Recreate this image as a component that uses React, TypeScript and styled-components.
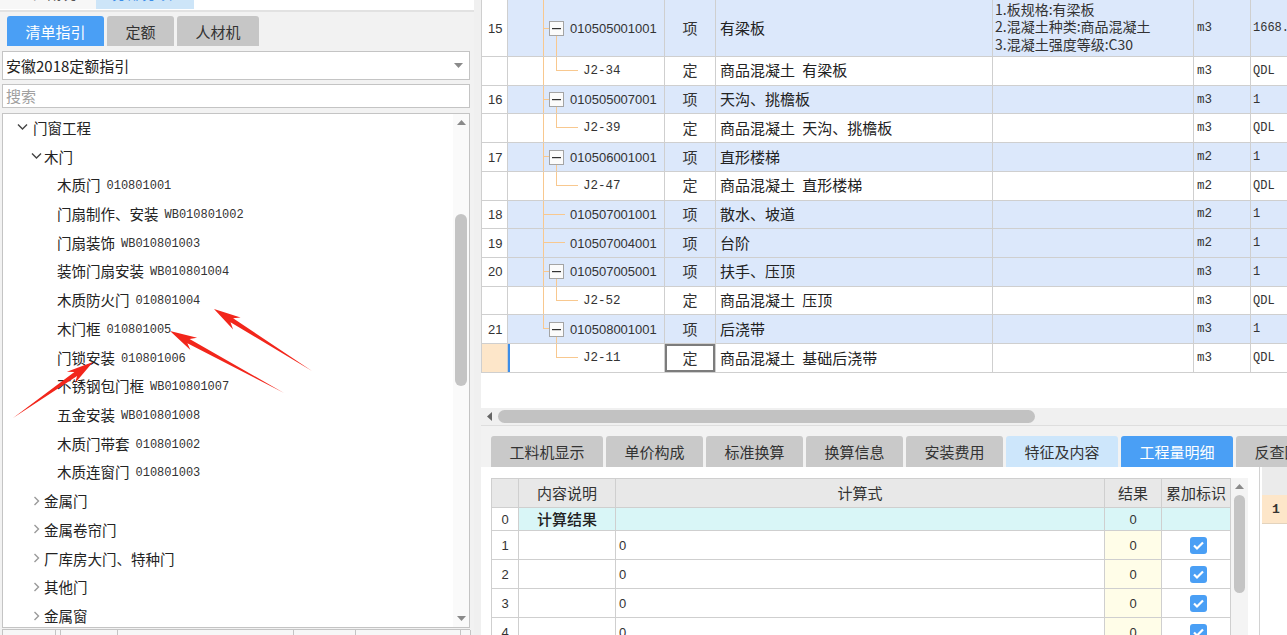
import React from "react";
import styled, { createGlobalStyle } from "styled-components";

const GlobalStyle = createGlobalStyle`
  html, body { margin: 0; padding: 0; background: #fff; }
  body {
    font-family: "Noto Sans CJK SC", "Liberation Sans", sans-serif;
    color: #222;
    overflow: hidden;
  }
  * { box-sizing: border-box; }
`;

const CJK = `"Noto Sans CJK SC", "Liberation Sans", sans-serif`;
const MONO = `"Liberation Mono", "Noto Sans CJK SC", monospace`;
const SANS = `"Liberation Sans", "Noto Sans CJK SC", sans-serif`;
const LINE = "#cfcfcf";

type TreeItem = { label: string; code?: string; level: 0 | 1 | 2; state?: "open" | "closed" };

const treeItems: TreeItem[] = [
  { label: "门窗工程", level: 0, state: "open" },
  { label: "木门", level: 1, state: "open" },
  { label: "木质门", code: "010801001", level: 2 },
  { label: "门扇制作、安装", code: "WB010801002", level: 2 },
  { label: "门扇装饰", code: "WB010801003", level: 2 },
  { label: "装饰门扇安装", code: "WB010801004", level: 2 },
  { label: "木质防火门", code: "010801004", level: 2 },
  { label: "木门框", code: "010801005", level: 2 },
  { label: "门锁安装", code: "010801006", level: 2 },
  { label: "不锈钢包门框", code: "WB010801007", level: 2 },
  { label: "五金安装", code: "WB010801008", level: 2 },
  { label: "木质门带套", code: "010801002", level: 2 },
  { label: "木质连窗门", code: "010801003", level: 2 },
  { label: "金属门", level: 1, state: "closed" },
  { label: "金属卷帘门", level: 1, state: "closed" },
  { label: "厂库房大门、特种门", level: 1, state: "closed" },
  { label: "其他门", level: 1, state: "closed" },
  { label: "金属窗", level: 1, state: "closed" },
];

type GridRow = {
  no?: string;
  code: string;
  type: string;
  name: string;
  feature?: string[];
  unit: string;
  qty: string;
  kind: "item" | "sub";
  child?: boolean;
  last?: boolean;
  selected?: boolean;
  tall?: boolean;
};

const gridRows: GridRow[] = [
  {
    no: "15", code: "010505001001", type: "项", name: "有梁板", unit: "m3", qty: "1668.",
    kind: "item", child: true, tall: true,
    feature: ["1.板规格:有梁板", "2.混凝土种类:商品混凝土", "3.混凝土强度等级:C30"],
  },
  { code: "J2-34", type: "定", name: "商品混凝土 有梁板", unit: "m3", qty: "QDL", kind: "sub" },
  { no: "16", code: "010505007001", type: "项", name: "天沟、挑檐板", unit: "m3", qty: "1", kind: "item", child: true },
  { code: "J2-39", type: "定", name: "商品混凝土 天沟、挑檐板", unit: "m3", qty: "QDL", kind: "sub" },
  { no: "17", code: "010506001001", type: "项", name: "直形楼梯", unit: "m2", qty: "1", kind: "item", child: true },
  { code: "J2-47", type: "定", name: "商品混凝土 直形楼梯", unit: "m2", qty: "QDL", kind: "sub" },
  { no: "18", code: "010507001001", type: "项", name: "散水、坡道", unit: "m2", qty: "1", kind: "item" },
  { no: "19", code: "010507004001", type: "项", name: "台阶", unit: "m2", qty: "1", kind: "item" },
  { no: "20", code: "010507005001", type: "项", name: "扶手、压顶", unit: "m3", qty: "1", kind: "item", child: true },
  { code: "J2-52", type: "定", name: "商品混凝土 压顶", unit: "m3", qty: "QDL", kind: "sub" },
  { no: "21", code: "010508001001", type: "项", name: "后浇带", unit: "m3", qty: "1", kind: "item", child: true, last: true },
  { code: "J2-11", type: "定", name: "商品混凝土 基础后浇带", unit: "m3", qty: "QDL", kind: "sub", last: true, selected: true },
];

const bottomTabs = [
  { label: "工料机显示", w: 112 },
  { label: "单价构成", w: 97 },
  { label: "标准换算", w: 97 },
  { label: "换算信息", w: 97 },
  { label: "安装费用", w: 97 },
  { label: "特征及内容", w: 112, tone: "light" },
  { label: "工程量明细", w: 112, tone: "active" },
  { label: "反查图形工程量", w: 142 },
];

/* ---------- layout ---------- */

const Screen = styled.div`
  position: relative;
  display: flex;
  width: 1287px;
  height: 635px;
  overflow: hidden;
  background: #fff;
`;

const LeftPane = styled.div`
  width: 474px;
  flex: none;
  display: flex;
  flex-direction: column;
  background: #f2f2f2;
`;

const Splitter = styled.div`
  width: 7px;
  flex: none;
  background: #f0f0f0;
`;

const RightPane = styled.div`
  flex: 1;
  min-width: 0;
  display: flex;
  flex-direction: column;
  overflow: hidden;
  background: #fff;
`;

/* ---------- left pane ---------- */

const TopStrip = styled.div`
  height: 12px;
  flex: none;
  display: flex;
  align-items: flex-start;
  overflow: hidden;
  background: #fff;
  border-bottom: 2px solid #e2e2e2;
`;

const TopTab = styled.div<{ $w: number; $bg: string; $color: string }>`
  width: ${(p) => p.$w}px;
  height: 26px;
  margin-top: -17px;
  padding-left: 16px;
  flex: none;
  background: ${(p) => p.$bg};
  color: ${(p) => p.$color};
  font-size: 15px;
  line-height: 20px;
`;

const TabRow = styled.div`
  height: 34px;
  flex: none;
  display: flex;
  align-items: flex-end;
  gap: 3px;
  padding-left: 7px;
`;

const GuideTab = styled.div<{ $w: number; $active?: boolean }>`
  width: ${(p) => p.$w}px;
  height: 30px;
  display: flex;
  align-items: center;
  justify-content: center;
  border-radius: 3px 3px 0 0;
  background: ${(p) => (p.$active ? "#4a9ff5" : "#c6c6c6")};
  color: ${(p) => (p.$active ? "#fff" : "#333")};
  font-size: 15px;
`;

const Select = styled.div`
  height: 29px;
  margin: 5px 4px 0 2px;
  display: flex;
  align-items: center;
  justify-content: space-between;
  padding: 0 6px 0 3px;
  background: #fff;
  border: 1px solid #c4c4c4;
  font-size: 15px;
  color: #222;
`;

const SearchBox = styled.div`
  height: 24px;
  margin: 4px 4px 0 2px;
  display: flex;
  align-items: center;
  padding-left: 3px;
  background: #fff;
  border: 1px solid #c4c4c4;
  font-size: 15px;
  color: #a0a0a0;
`;

const TreeBox = styled.div`
  height: 516px;
  margin: 5px 4px 0 2px;
  display: flex;
  background: #fff;
  border: 1px solid #c4c4c4;
  overflow: hidden;
`;

const TreeList = styled.div`
  flex: 1;
  min-width: 0;
`;

const TreeRow = styled.div<{ $pad: number }>`
  height: 28.72px;
  display: flex;
  align-items: center;
  padding-left: ${(p) => p.$pad}px;
  padding-bottom: 2px;
  white-space: nowrap;
  font-size: 14.5px;
  color: #222;
`;

const Twisty = styled.span<{ $gap: number }>`
  width: 16px;
  height: 12px;
  margin-right: ${(p) => p.$gap}px;
  display: inline-flex;
  align-items: center;
  justify-content: center;
  flex: none;
`;

const TreeCode = styled.span`
  margin-left: 6px;
  margin-top: 3px;
  font-family: ${MONO};
  font-size: 12px;
  color: #333;
`;

const VScroll = styled.div`
  width: 16px;
  flex: none;
  display: flex;
  flex-direction: column;
  align-items: center;
  background: #fafafa;
`;

const ScrollArrow = styled.div<{ $h: number }>`
  height: ${(p) => p.$h}px;
  width: 100%;
  flex: none;
  display: flex;
  align-items: center;
  justify-content: center;
`;

const ScrollTrack = styled.div`
  flex: 1;
  width: 100%;
  display: flex;
  flex-direction: column;
  align-items: center;
`;

const Thumb = styled.div<{ $top: number; $h: number; $w: number }>`
  margin-top: ${(p) => p.$top}px;
  height: ${(p) => p.$h}px;
  width: ${(p) => p.$w}px;
  border-radius: 6px;
  background: #c4c4c4;
`;

const FooterStrip = styled.div`
  height: 6px;
  margin: 1px 4px 0 2px;
  display: flex;
  background: #f7f7f7;
  border-top: 1px solid #c4c4c4;
  border-left: 1px solid #c4c4c4;
`;

const FooterCell = styled.div<{ $w: number }>`
  width: ${(p) => p.$w}px;
  flex: none;
  border-right: 1px solid #c4c4c4;
`;

/* ---------- upper grid ---------- */

const UpperArea = styled.div`
  height: 408px;
  flex: none;
`;

const GridRowBox = styled.div<{ $tall?: boolean; $bg: string }>`
  display: grid;
  grid-template-columns: 27px 157px 51px 277px 201px 57px 60px;
  width: 830px;
  height: ${(p) => (p.$tall ? "57px" : "28.73px")};
  background: ${(p) => p.$bg};
`;

const Cell = styled.div`
  display: flex;
  align-items: center;
  min-width: 0;
  overflow: hidden;
  white-space: nowrap;
  border-right: 1px solid ${LINE};
  border-bottom: 1px solid ${LINE};
`;

const NoCell = styled(Cell)<{ $selected?: boolean }>`
  border-left: 1px solid ${LINE};
  padding-left: 6px;
  background: ${(p) => (p.$selected ? "#fde6c9" : "#fff")};
  font-family: ${SANS};
  font-size: 13px;
  color: #333;
`;

const TreeCell = styled(Cell)<{ $pad: number; $selected?: boolean }>`
  position: relative;
  padding-left: ${(p) => p.$pad}px;
  box-shadow: ${(p) => (p.$selected ? "inset 2px 0 0 #3d8ee8" : "none")};
`;

const Connectors = styled.svg`
  position: absolute;
  inset: 0;
  width: 100%;
  height: 100%;
`;

const Toggle = styled.span`
  position: relative;
  width: 15px;
  height: 15px;
  margin-right: 6px;
  flex: none;
  display: inline-flex;
  align-items: center;
  justify-content: center;
  background: #fbfbfb;
  border: 1px solid #a4a4a4;
`;

const ItemCode = styled.span`
  position: relative;
  font-family: ${SANS};
  font-size: 13px;
  color: #333;
`;

const SubCode = styled.span`
  position: relative;
  font-family: ${MONO};
  font-size: 12.5px;
  color: #333;
`;

const TypeCell = styled(Cell)<{ $focus?: boolean }>`
  justify-content: center;
  padding-bottom: 2px;
  font-size: 15px;
  color: #333;
  box-shadow: ${(p) => (p.$focus ? "inset 0 0 0 2px #7c7c7c" : "none")};
`;

const NameCell = styled(Cell)`
  padding-left: 4px;
  padding-bottom: 2px;
  font-size: 15px;
  word-spacing: 4px;
  color: #222;
`;

const FeatureCell = styled(Cell)`
  flex-direction: column;
  align-items: flex-start;
  justify-content: center;
  padding-left: 2px;
  padding-bottom: 2px;
  font-size: 14px;
  line-height: 17.5px;
  color: #333;
`;

const MonoCell = styled(Cell)`
  padding-left: 3px;
  font-family: ${MONO};
  font-size: 12.5px;
  color: #333;
`;

const QtyCell = styled(MonoCell)`
  padding-left: 2px;
  font-size: 12px;
`;

const HScroll = styled.div`
  height: 18px;
  flex: none;
  display: flex;
  align-items: center;
  padding-left: 6px;
  background: #f0f0f0;
  border-bottom: 1px solid #dedede;
`;

const HThumb = styled.div`
  width: 537px;
  height: 13px;
  margin-left: 6px;
  border-radius: 7px;
  background: #c2c2c2;
`;

/* ---------- bottom tabs + detail ---------- */

const DetailTabs = styled.div`
  height: 41px;
  flex: none;
  display: flex;
  align-items: flex-end;
  gap: 3px;
  padding-left: 10px;
  background: #f2f2f2;
`;

const DetailTab = styled.div<{ $w: number; $tone?: string }>`
  width: ${(p) => p.$w}px;
  height: 31px;
  flex: none;
  display: flex;
  align-items: center;
  justify-content: center;
  border-radius: 3px 3px 0 0;
  font-size: 15px;
  background: ${(p) => (p.$tone === "active" ? "#4a9ff5" : p.$tone === "light" ? "#cde6fb" : "#c9c9c9")};
  color: ${(p) => (p.$tone === "active" ? "#fff" : "#333")};
`;

const LowerArea = styled.div`
  flex: 1;
  display: flex;
  min-height: 0;
`;

const DetailPanel = styled.div`
  width: 778px;
  flex: none;
  padding: 11px 0 0 10px;
  display: flex;
  align-items: flex-start;
  background: #fff;
`;

const DetailGrid = styled.div`
  width: 740px;
  flex: none;
  border-top: 1px solid ${LINE};
`;

const DRow = styled.div<{ $h: number }>`
  display: grid;
  grid-template-columns: 28px 97px 489px 57px 69px;
  height: ${(p) => p.$h}px;
`;

const DCell = styled.div<{ $bg?: string; $align?: string }>`
  display: flex;
  align-items: center;
  justify-content: ${(p) => p.$align ?? "center"};
  padding-left: ${(p) => (p.$align === "flex-start" ? "3px" : "0")};
  background: ${(p) => p.$bg ?? "#fff"};
  border-right: 1px solid ${LINE};
  border-bottom: 1px solid ${LINE};
  font-family: ${SANS};
  font-size: 13px;
  color: #333;
  overflow: hidden;
  white-space: nowrap;
`;

const DNo = styled(DCell)`
  border-left: 1px solid ${LINE};
`;

const DHead = styled(DCell)`
  background: #e8e8e8;
  padding-bottom: 2px;
  font-family: ${CJK};
  font-size: 15px;
`;

const DHeadNo = styled(DHead)`
  border-left: 1px solid ${LINE};
`;

const DLabel = styled(DCell)`
  padding-bottom: 2px;
  font-family: ${CJK};
  font-size: 15px;
  font-weight: 500;
  color: #222;
`;

const Check = styled.span`
  width: 17px;
  height: 17px;
  margin-left: 4px;
  border-radius: 3px;
  background: #4a9ff5;
  display: inline-flex;
  align-items: center;
  justify-content: center;
`;

const DetailScroll = styled(VScroll)`
  width: 17px;
  height: 168px;
  background: #f4f4f4;
`;

const SidePanel = styled.div`
  flex: 1;
  padding-left: 2px;
  background: #fff;
  border-left: 1px solid #d2d2d2;
`;

const SideHead = styled.div`
  height: 28px;
  background: #ebebeb;
`;

const SideCell = styled.div`
  height: 29px;
  display: flex;
  align-items: center;
  padding-left: 10px;
  background: #fde6c9;
  border-bottom: 1px solid #e3d3bd;
  font-family: ${MONO};
  font-size: 13px;
  font-weight: bold;
  color: #333;
`;

/* ---------- annotation arrows ---------- */

const Annotations = styled.svg`
  position: absolute;
  left: 0;
  top: 0;
  pointer-events: none;
  z-index: 5;
`;

function arrowPoints(tx: number, ty: number, px: number, py: number, head = 27, barb = 7) {
  const dx = px - tx;
  const dy = py - ty;
  const len = Math.hypot(dx, dy);
  const ux = dx / len;
  const uy = dy / len;
  const nx = -uy;
  const ny = ux;
  const neck = head * 0.78;
  const bx = px - ux * neck;
  const by = py - uy * neck;
  const wx = px - ux * head;
  const wy = py - uy * head;
  const pts = [
    [tx, ty],
    [bx + nx * 2.4, by + ny * 2.4],
    [wx + nx * barb, wy + ny * barb],
    [px, py],
    [wx - nx * barb, wy - ny * barb],
    [bx - nx * 2.4, by - ny * 2.4],
  ];
  return pts.map((p) => `${p[0].toFixed(1)},${p[1].toFixed(1)}`).join(" ");
}

/* ---------- pieces ---------- */

function Chevron({ open }: { open: boolean }) {
  return open ? (
    <svg width="11" height="8" viewBox="0 0 11 8">
      <polyline points="1,1.5 5.5,6 10,1.5" fill="none" stroke="#444" strokeWidth="1.4" />
    </svg>
  ) : (
    <svg width="7" height="10" viewBox="0 0 7 10">
      <polyline points="1.5,1 5.5,5 1.5,9" fill="none" stroke="#9a9a9a" strokeWidth="1.4" />
    </svg>
  );
}

function Triangle({ dir, color = "#777" }: { dir: "up" | "down" | "left"; color?: string }) {
  const pts = dir === "up" ? "0,5 4.5,0 9,5" : dir === "down" ? "0,0 4.5,5 9,0" : "5,0 0,4.5 5,9";
  const w = dir === "left" ? 5 : 9;
  const h = dir === "left" ? 9 : 5;
  return (
    <svg width={w} height={h} viewBox={`0 0 ${w} ${h}`}>
      <polygon points={pts} fill={color} />
    </svg>
  );
}

function TreeLines({ row }: { row: GridRow }) {
  const c = "#f8c88f";
  if (row.kind === "item") {
    return (
      <Connectors shapeRendering="crispEdges">
        <line x1="35.5" x2="35.5" y1="0" y2={row.last ? "50%" : "100%"} stroke={c} />
        <line x1="35.5" x2={row.child ? 41 : 57} y1="50%" y2="50%" stroke={c} />
        {row.child && <line x1="48.5" x2="48.5" y1="50%" y2="100%" stroke={c} />}
      </Connectors>
    );
  }
  return (
    <Connectors shapeRendering="crispEdges">
      {!row.last && <line x1="35.5" x2="35.5" y1="0" y2="100%" stroke={c} />}
      <line x1="48.5" x2="48.5" y1="0" y2="50%" stroke={c} />
      <line x1="48.5" x2="70" y1="50%" y2="50%" stroke={c} />
    </Connectors>
  );
}

function UpperGrid() {
  return (
    <UpperArea>
      {gridRows.map((r, i) => {
        const pad = r.kind === "sub" ? 75 : r.child ? 41 : 62;
        return (
          <GridRowBox key={i} $tall={r.tall} $bg={r.kind === "item" ? "#dce8fb" : "#fff"}>
            <NoCell $selected={r.selected}>{r.no}</NoCell>
            <TreeCell $pad={pad} $selected={r.selected}>
              <TreeLines row={r} />
              {r.kind === "item" && r.child && (
                <Toggle>
                  <svg width="9" height="3" viewBox="0 0 9 3">
                    <rect x="0" y="1" width="9" height="1.2" fill="#333" />
                  </svg>
                </Toggle>
              )}
              {r.kind === "item" ? <ItemCode>{r.code}</ItemCode> : <SubCode>{r.code}</SubCode>}
            </TreeCell>
            <TypeCell $focus={r.selected}>{r.type}</TypeCell>
            <NameCell>{r.name}</NameCell>
            <FeatureCell>
              {r.feature?.map((f) => (
                <span key={f}>{f}</span>
              ))}
            </FeatureCell>
            <MonoCell>{r.unit}</MonoCell>
            <QtyCell>{r.qty}</QtyCell>
          </GridRowBox>
        );
      })}
    </UpperArea>
  );
}

function DetailTable() {
  return (
    <DetailGrid>
      <DRow $h={29}>
        <DHeadNo />
        <DHead>内容说明</DHead>
        <DHead>计算式</DHead>
        <DHead>结果</DHead>
        <DHead>累加标识</DHead>
      </DRow>
      <DRow $h={23}>
        <DNo>0</DNo>
        <DLabel $bg="#d9f6f7">计算结果</DLabel>
        <DCell $bg="#d9f6f7" />
        <DCell $bg="#d9f6f7">0</DCell>
        <DCell $bg="#d9f6f7" />
      </DRow>
      {[1, 2, 3, 4].map((n) => (
        <DRow key={n} $h={29}>
          <DNo>{n}</DNo>
          <DCell />
          <DCell $align="flex-start">0</DCell>
          <DCell $bg="#fffde8">0</DCell>
          <DCell>
            <Check>
              <svg width="13" height="11" viewBox="0 0 13 11">
                <polyline points="2,5.5 5,8.5 11,2.5" fill="none" stroke="#fff" strokeWidth="2.2" />
              </svg>
            </Check>
          </DCell>
        </DRow>
      ))}
    </DetailGrid>
  );
}

export default function App() {
  return (
    <>
      <GlobalStyle />
      <Screen>
        <LeftPane>
          <TopStrip>
            <TopTab $w={96} $bg="#f7f7f7" $color="#555">工程概况</TopTab>
            <TopTab $w={98} $bg="#cde5f8" $color="#3d8ee8">分部分项</TopTab>
          </TopStrip>
          <TabRow>
            <GuideTab $w={97} $active>清单指引</GuideTab>
            <GuideTab $w={67}>定额</GuideTab>
            <GuideTab $w={82}>人材机</GuideTab>
          </TabRow>
          <Select>
            <span>安徽2018定额指引</span>
            <Triangle dir="down" color="#8a8a8a" />
          </Select>
          <SearchBox>搜索</SearchBox>
          <TreeBox>
            <TreeList>
              {treeItems.map((t) =>
                t.level === 2 ? (
                  <TreeRow key={t.label} $pad={54}>
                    {t.label}
                    <TreeCode>{t.code}</TreeCode>
                  </TreeRow>
                ) : (
                  <TreeRow key={t.label} $pad={t.level === 0 ? 11 : 25}>
                    <Twisty $gap={t.level === 0 ? 3 : 0}>
                      <Chevron open={t.state === "open"} />
                    </Twisty>
                    {t.label}
                  </TreeRow>
                )
              )}
            </TreeList>
            <VScroll>
              <ScrollArrow $h={18}>
                <Triangle dir="up" color="#8a8a8a" />
              </ScrollArrow>
              <ScrollTrack>
                <Thumb $top={82} $h={172} $w={12} />
              </ScrollTrack>
              <ScrollArrow $h={18}>
                <Triangle dir="down" color="#8a8a8a" />
              </ScrollArrow>
            </VScroll>
          </TreeBox>
          <FooterStrip>
            {[53, 5, 57, 176, 62, 105, 10].map((w, i) => (
              <FooterCell key={i} $w={w} />
            ))}
          </FooterStrip>
        </LeftPane>
        <Splitter />
        <RightPane>
          <UpperGrid />
          <HScroll>
            <Triangle dir="left" color="#666" />
            <HThumb />
          </HScroll>
          <DetailTabs>
            {bottomTabs.map((t) => (
              <DetailTab key={t.label} $w={t.w} $tone={t.tone}>
                {t.label}
              </DetailTab>
            ))}
          </DetailTabs>
          <LowerArea>
            <DetailPanel>
              <DetailTable />
              <DetailScroll>
                <ScrollArrow $h={17}>
                  <Triangle dir="up" color="#8a8a8a" />
                </ScrollArrow>
                <Thumb $top={0} $h={98} $w={11} />
              </DetailScroll>
            </DetailPanel>
            <SidePanel>
              <SideHead />
              <SideCell>1</SideCell>
            </SidePanel>
          </LowerArea>
        </RightPane>
        <Annotations width="480" height="635" viewBox="0 0 480 635">
          <polygon points={arrowPoints(312, 371, 214, 309)} fill="#f2261b" />
          <polygon points={arrowPoints(284, 393, 170, 331)} fill="#f2261b" />
          <polygon points={arrowPoints(13, 418, 93, 362)} fill="#f2261b" />
        </Annotations>
      </Screen>
    </>
  );
}
